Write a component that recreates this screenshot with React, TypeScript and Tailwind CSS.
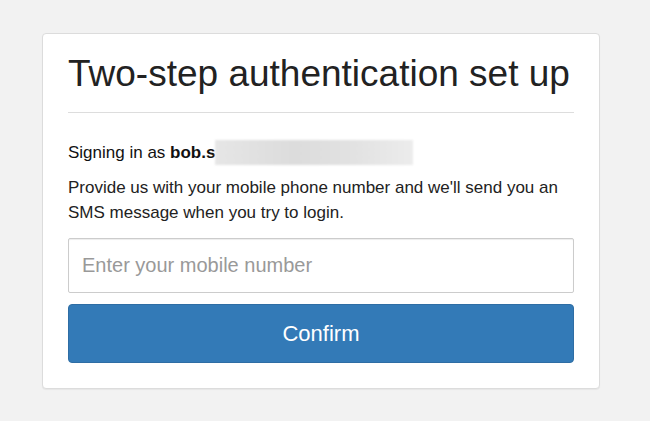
export default function App() {
  return (
    <div className="min-h-[421px] w-[650px] bg-[#f2f2f2] pt-[33px] pl-[42px] font-['Liberation_Sans',Arial,sans-serif] text-[#333]">
      <div className="w-[558px] rounded-[4px] border border-[#dcdcdc] bg-white px-[25px] pb-[25px] shadow-[0_1px_1px_rgba(0,0,0,0.05)]">
        <h1 className="mt-[20px] whitespace-nowrap text-[37px] leading-[40px] text-[#222]">Two-step authentication set up</h1>
        <hr className="mt-[18px] border-t border-[#dddddd]" />
        <p className="mt-[27px] flex items-center text-[17px] leading-[24px] text-[#111]">
          Signing in as&nbsp;<b>bob.s</b>
          <span className="inline-block h-[25px] w-[198px] bg-[linear-gradient(90deg,#e6e6e6,#dcdcdc_40%,#e2e2e2_70%,#ececec)] blur-[1px]" />
        </p>
        <p className="mt-[10px] text-[17px] leading-[25px] text-[#222]">
          Provide us with your mobile phone number and we'll send you an SMS message when you try to login.
        </p>
        <input
          type="text"
          placeholder="Enter your mobile number"
          className="mt-[13px] block h-[55px] w-full rounded-[2px] border border-[#cccccc] px-[13px] text-[20px] text-[#555] shadow-[inset_0_1px_1px_rgba(0,0,0,0.075)] outline-none placeholder:text-[#999]"
        />
        <button className="mt-[11px] block h-[59px] w-full rounded-[4px] border border-[#2e6da4] bg-[#337ab7] text-[22px] text-white">
          Confirm
        </button>
      </div>
    </div>
  );
}
